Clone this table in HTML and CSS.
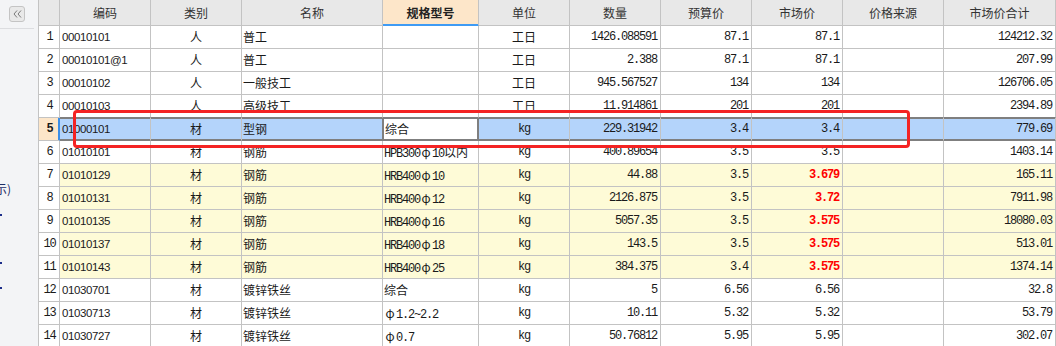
FILE: index.html
```html
<!DOCTYPE html>
<html lang="zh">
<head>
<meta charset="utf-8">
<title>材料表</title>
<link rel="stylesheet" href="styles.css">
</head>
<body>
<div class="app">
  <aside class="side">
    <div class="side-top">
      <button class="collapse" type="button">
        <svg width="9" height="8" viewBox="0 0 9 8"><path d="M4 0.5 L1 4 L4 7.5 M8 0.5 L5 4 L8 7.5" fill="none" stroke="#7a7a7a" stroke-width="1"/></svg>
      </button>
    </div>
    <div class="side-label">示)</div>
    <div class="side-mark m1"></div>
    <div class="side-mark m2"></div>
    <div class="side-mark m3"></div>
  </aside>

  <div class="table">
    <div class="row head">
      <div class="c"></div>
      <div class="c">编码</div>
      <div class="c">类别</div>
      <div class="c">名称</div>
      <div class="c hl">规格型号</div>
      <div class="c">单位</div>
      <div class="c">数量</div>
      <div class="c">预算价</div>
      <div class="c">市场价</div>
      <div class="c">价格来源</div>
      <div class="c">市场价合计</div>
    </div>

    <div class="row">
      <div class="c n">1</div><div class="c code">00010101</div><div class="c cat">人</div><div class="c name">普工</div><div class="c spec"></div><div class="c unit">工日</div><div class="c num">1426.088591</div><div class="c num">87.1</div><div class="c num">87.1</div><div class="c"></div><div class="c num">124212.32</div>
    </div>
    <div class="row">
      <div class="c n">2</div><div class="c code">00010101@1</div><div class="c cat">人</div><div class="c name">普工</div><div class="c spec"></div><div class="c unit">工日</div><div class="c num">2.388</div><div class="c num">87.1</div><div class="c num">87.1</div><div class="c"></div><div class="c num">207.99</div>
    </div>
    <div class="row">
      <div class="c n">3</div><div class="c code">00010102</div><div class="c cat">人</div><div class="c name">一般技工</div><div class="c spec"></div><div class="c unit">工日</div><div class="c num">945.567527</div><div class="c num">134</div><div class="c num">134</div><div class="c"></div><div class="c num">126706.05</div>
    </div>
    <div class="row before-sel">
      <div class="c n">4</div><div class="c code">00010103</div><div class="c cat">人</div><div class="c name">高级技工</div><div class="c spec"></div><div class="c unit">工日</div><div class="c num">11.914861</div><div class="c num">201</div><div class="c num">201</div><div class="c"></div><div class="c num">2394.89</div>
    </div>
    <div class="row sel">
      <div class="c n">5</div><div class="c code">01000101</div><div class="c cat">材</div><div class="c name edit-prev">型钢</div><div class="c spec edit">综合</div><div class="c unit m">kg</div><div class="c num">229.31942</div><div class="c num">3.4</div><div class="c num">3.4</div><div class="c"></div><div class="c num">779.69</div>
    </div>
    <div class="row">
      <div class="c n">6</div><div class="c code">01010101</div><div class="c cat">材</div><div class="c name">钢筋</div><div class="c spec"><span class="m">HPB300</span><span class="fw">φ</span><span class="m">10</span>以内</div><div class="c unit m">kg</div><div class="c num">400.89654</div><div class="c num">3.5</div><div class="c num">3.5</div><div class="c"></div><div class="c num">1403.14</div>
    </div>
    <div class="row yel">
      <div class="c n">7</div><div class="c code">01010129</div><div class="c cat">材</div><div class="c name">钢筋</div><div class="c spec"><span class="m">HRB400</span><span class="fw">φ</span><span class="m">10</span></div><div class="c unit m">kg</div><div class="c num">44.88</div><div class="c num">3.5</div><div class="c num red">3.679</div><div class="c"></div><div class="c num">165.11</div>
    </div>
    <div class="row yel">
      <div class="c n">8</div><div class="c code">01010131</div><div class="c cat">材</div><div class="c name">钢筋</div><div class="c spec"><span class="m">HRB400</span><span class="fw">φ</span><span class="m">12</span></div><div class="c unit m">kg</div><div class="c num">2126.875</div><div class="c num">3.5</div><div class="c num red">3.72</div><div class="c"></div><div class="c num">7911.98</div>
    </div>
    <div class="row yel">
      <div class="c n">9</div><div class="c code">01010135</div><div class="c cat">材</div><div class="c name">钢筋</div><div class="c spec"><span class="m">HRB400</span><span class="fw">φ</span><span class="m">16</span></div><div class="c unit m">kg</div><div class="c num">5057.35</div><div class="c num">3.5</div><div class="c num red">3.575</div><div class="c"></div><div class="c num">18080.03</div>
    </div>
    <div class="row yel">
      <div class="c n">10</div><div class="c code">01010137</div><div class="c cat">材</div><div class="c name">钢筋</div><div class="c spec"><span class="m">HRB400</span><span class="fw">φ</span><span class="m">18</span></div><div class="c unit m">kg</div><div class="c num">143.5</div><div class="c num">3.5</div><div class="c num red">3.575</div><div class="c"></div><div class="c num">513.01</div>
    </div>
    <div class="row yel">
      <div class="c n">11</div><div class="c code">01010143</div><div class="c cat">材</div><div class="c name">钢筋</div><div class="c spec"><span class="m">HRB400</span><span class="fw">φ</span><span class="m">25</span></div><div class="c unit m">kg</div><div class="c num">384.375</div><div class="c num">3.4</div><div class="c num red">3.575</div><div class="c"></div><div class="c num">1374.14</div>
    </div>
    <div class="row">
      <div class="c n">12</div><div class="c code">01030701</div><div class="c cat">材</div><div class="c name">镀锌铁丝</div><div class="c spec">综合</div><div class="c unit m">kg</div><div class="c num">5</div><div class="c num">6.56</div><div class="c num">6.56</div><div class="c"></div><div class="c num">32.8</div>
    </div>
    <div class="row">
      <div class="c n">13</div><div class="c code">01030713</div><div class="c cat">材</div><div class="c name">镀锌铁丝</div><div class="c spec"><span class="fw">φ</span><span class="m">1.2~2.2</span></div><div class="c unit m">kg</div><div class="c num">10.11</div><div class="c num">5.32</div><div class="c num">5.32</div><div class="c"></div><div class="c num">53.79</div>
    </div>
    <div class="row">
      <div class="c n">14</div><div class="c code">01030727</div><div class="c cat">材</div><div class="c name">镀锌铁丝</div><div class="c spec"><span class="fw">φ</span><span class="m">0.7</span></div><div class="c unit m">kg</div><div class="c num">50.76812</div><div class="c num">5.95</div><div class="c num">5.95</div><div class="c"></div><div class="c num">302.07</div>
    </div>
  </div>

  <div class="mark-box"></div>
</div>
</body>
</html>
```

FILE: styles.css
```css
* { box-sizing: border-box; }
html, body { margin: 0; padding: 0; background: #fff; }
body {
  width: 1056px;
  height: 346px;
  overflow: hidden;
  font-family: "Noto Sans CJK SC", sans-serif;
  font-size: 12px;
  color: #1a1a1a;
}
.app { display: flex; position: relative; height: 346px; }

/* left side panel */
.side {
  width: 38px;
  flex: none;
  background: #f3f4f6;
  display: flex;
  flex-direction: column;
  overflow: hidden;
}
.side-top {
  width: 34px;
  height: 29px;
  border-bottom: 1px solid #dcdde0;
  padding: 6px 0 0 9px;
}
.collapse {
  width: 16px;
  height: 16px;
  border: 1px solid #c4c4c4;
  border-radius: 3px;
  background: #e9e9e9;
  padding: 0;
  display: flex;
  align-items: center;
  justify-content: center;
}
.side-label {
  margin-top: 153px;
  margin-left: -5px;
  line-height: 14px;
  color: #1c2d66;
  white-space: nowrap;
}
.side-mark { width: 2px; height: 2px; background: #1c2d8a; }
.m1 { margin-top: 18px; }
.m2 { margin-top: 46px; }
.m3 { margin-top: 23px; }

/* grid */
.table {
  flex: none;
  width: 1018px;
  border-left: 1px solid #c3c3c3;
}
.row {
  display: grid;
  grid-template-columns: 21px 91px 91px 141px 96px 91px 91px 91px 91px 101px 112px;
}
.c {
  height: 23px;
  line-height: 22px;
  border-right: 1px solid #c3c3c3;
  border-bottom: 1px solid #c3c3c3;
  white-space: nowrap;
  overflow: hidden;
  padding: 0 2px 0 1px;
  background: #fff;
}
.head .c {
  height: 26px;
  line-height: 25px;
  background: #e8e8e8;
  text-align: center;
  color: #333;
  padding: 0;
}
.head .hl {
  background: #fde6c9;
  font-weight: bold;
  color: #222;
  border-bottom-color: #3f9bf4;
  box-shadow: inset 0 -1px 0 #3f9bf4;
}

.n {
  text-align: center;
  padding: 0;
  font-family: "Liberation Mono", monospace;
  font-size: 12px;
  letter-spacing: -1.2px;
  text-indent: 1px;
}
.code {
  font-family: "Liberation Sans", sans-serif;
  font-size: 11.5px;
  letter-spacing: -0.4px;
  padding-left: 2px;
}
.cat, .unit { text-align: center; padding: 0; }
.num {
  text-align: right;
  padding-right: 3px;
  font-family: "Liberation Mono", monospace;
  font-size: 12px;
  letter-spacing: -1.2px;
}
.m {
  font-family: "Liberation Mono", monospace;
  font-size: 12px;
  letter-spacing: -1.2px;
}
.spec { padding-left: 1px; }
.fw {
  display: inline-block;
  width: 12px;
  text-align: center;
  font-family: "Noto Sans CJK SC", sans-serif;
  font-size: 12px;
}
.red { color: #ff0000; font-weight: bold; }

/* yellow rows */
.yel .c:not(.n) { background: #fefbd7; }

/* selected row */
.before-sel .c:not(.n) { border-bottom-color: #7f7f7f; }
.sel .c:not(.n) {
  background: #b4d4fb;
  border-bottom-color: #7f7f7f;
  box-shadow: inset 0 1px 0 #7f7f7f, inset 0 -1px 0 #7f7f7f;
}
.sel .n {
  background: #fde6c9;
  font-weight: bold;
  border-right-color: #3b8ee8;
  box-shadow: inset -1px 0 0 #3b8ee8;
}
.sel .edit-prev { border-right-color: #7f7f7f; }
.sel .spec.edit {
  background: #fff;
  border-right-color: #7f7f7f;
  box-shadow: inset 1px 1px 0 #7f7f7f, inset -1px -1px 0 #7f7f7f;
  padding-left: 2px;
}

/* red annotation box drawn over the grid */
.mark-box {
  position: absolute;
  left: 73px;
  top: 110px;
  width: 837px;
  height: 38px;
  border: 3px solid #f42323;
  border-radius: 4px;
  pointer-events: none;
}
```
